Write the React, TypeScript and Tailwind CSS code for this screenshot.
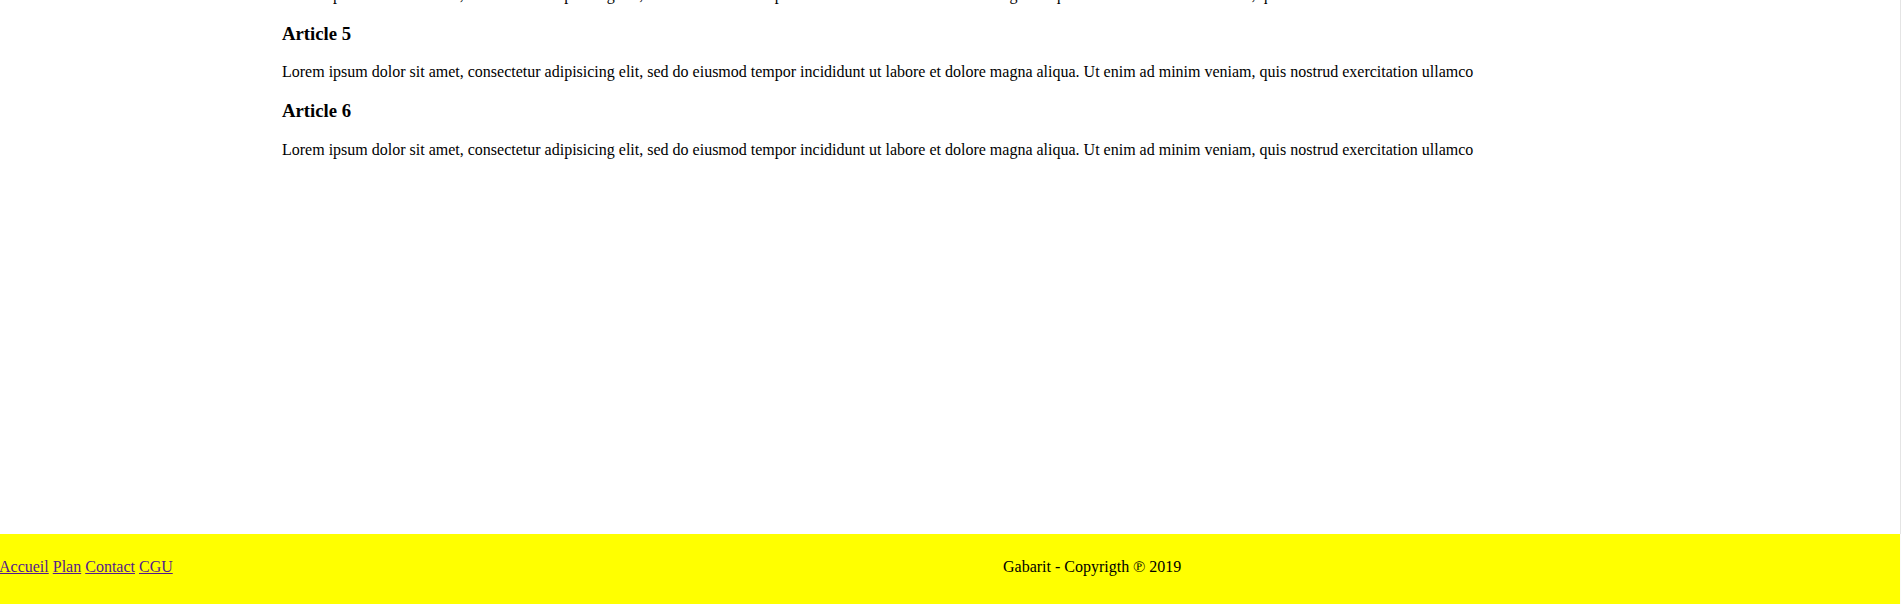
import React from 'react'

const lorem =
  'Lorem ipsum dolor sit amet, consectetur adipisicing elit, sed do eiusmod tempor incididunt ut labore et dolore magna aliqua. Ut enim ad minim veniam, quis nostrud exercitation ullamco'

const articles = ['Article 5', 'Article 6']

const links = ['Accueil', 'Plan', 'Contact', 'CGU']

export default function App() {
  return (
    <div className="flex h-[604px] w-full overflow-hidden bg-white font-['Liberation_Serif',serif] text-black">
      <div className="flex min-w-0 flex-1 flex-col">
        {/* Main content, page is scrolled down */}
        <main className="min-h-0 flex-1 overflow-hidden pl-[282px]">
          <div className="-mt-[14px]">
            <p className="mb-4 mt-0 whitespace-nowrap text-[16px] leading-[normal]">{lorem}</p>
            {articles.map((title) => (
              <section key={title}>
                <h3 className="my-[18.72px] text-[18.72px] font-bold leading-[normal]">{title}</h3>
                <p className="my-4 whitespace-nowrap text-[16px] leading-[normal]">{lorem}</p>
              </section>
            ))}
          </div>
        </main>

        {/* Footer */}
        <footer className="flex h-[70px] shrink-0 items-start bg-[#ffff00] pt-[24px] text-[16px] leading-[normal]">
          <nav className="w-[1003px] shrink-0 -translate-x-px">
            {links.map((l, i) => (
              <React.Fragment key={l}>
                <a href="#" className="text-[#551a8b] underline">
                  {l}
                </a>
                {i < links.length - 1 ? ' ' : ''}
              </React.Fragment>
            ))}
          </nav>
          <p className="whitespace-nowrap">Gabarit - Copyrigth ℗ 2019</p>
        </footer>
      </div>
      <div className="flex w-px flex-col">
        <div className="flex-1 bg-[#e4e4e4]" />
        <div className="h-[70px] bg-[#fafafa]" />
      </div>
    </div>
  )
}
